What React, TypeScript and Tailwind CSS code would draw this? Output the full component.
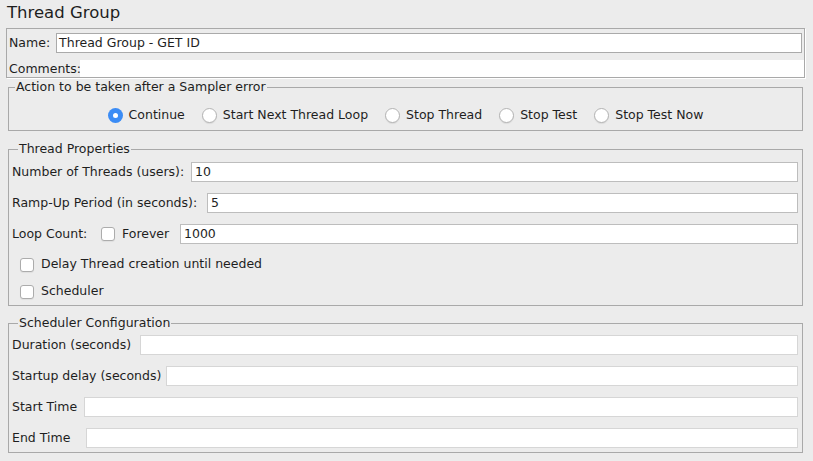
const Radio = ({ label, checked }: { label: string; checked?: boolean }) => (
  <label className="flex items-center gap-[6px]">
    {checked ? (
      <span className="flex h-[15px] w-[15px] items-center justify-center rounded-full bg-[#3b8cf5]">
        <span className="h-[5px] w-[5px] rounded-full bg-white" />
      </span>
    ) : (
      <span className="h-[15px] w-[15px] rounded-full border border-[#b3b3b3] bg-white shadow-[0_1px_1px_rgba(0,0,0,0.08)]" />
    )}
    <span>{label}</span>
  </label>
);

const Checkbox = () => (
  <span className="h-[14px] w-[14px] shrink-0 rounded-[3px] border border-[#acacac] bg-white shadow-[0_1px_1px_rgba(0,0,0,0.06)]" />
);

const Field = ({ value = "", light }: { value?: string; light?: boolean }) => (
  <div
    className={
      "flex h-[20px] flex-1 items-center border bg-white pl-[3px] " +
      (light ? "border-[#d6d6d6]" : "border-[#bdbdbd]")
    }
  >
    {value}
  </div>
);

const App = () => {
  return (
    <div className="h-[461px] w-[813px] overflow-hidden bg-[#ececec] font-['DejaVu_Sans',sans-serif] text-[12.5px] text-[#1e1e1e]">
      {/* titre */}
      <div className="h-[28px] pl-[7px] text-[16.5px] leading-[26px]">Thread Group</div>

      {/* nom + commentaires */}
      <div className="ml-[6px] h-[50px] w-[799px] border border-[#a9a9a9] shadow-[1px_1px_0_#fff]">
        <div className="flex items-center gap-[6px] pl-[2px] pr-[2px] pt-[4px]">
          <span>Name:</span>
          <div className="flex h-[20px] flex-1 items-center border border-[#aaaaaa] bg-white pl-[2px]">
            Thread Group - GET ID
          </div>
        </div>
        <div className="mt-[7px] flex h-[17px] items-center pl-[2px]">
          <span className="w-[71px] pt-[2px]">Comments:</span>
          <div className="h-full flex-1 bg-white" />
        </div>
      </div>

      {/* action après erreur */}
      <fieldset className="ml-[8px] mt-[2px] w-[795px] border border-[#a9a9a9] pb-[7px] pt-[13px]">
        <legend className="ml-[6px] px-[1px] leading-[14px]">Action to be taken after a Sampler error</legend>
        <div className="flex items-center justify-center gap-[17px] leading-[16px]">
          <Radio label="Continue" checked />
          <Radio label="Start Next Thread Loop" />
          <Radio label="Stop Thread" />
          <Radio label="Stop Test" />
          <Radio label="Stop Test Now" />
        </div>
      </fieldset>

      {/* propriétés */}
      <fieldset className="ml-[8px] mt-[11px] w-[795px] border border-[#a9a9a9] pl-[3px] pr-[4px] pt-[6px]">
        <legend className="ml-[6px] px-[1px] leading-[14px]">Thread Properties</legend>
        <div className="flex flex-col gap-[11px]">
          <div className="flex items-center">
            <span className="w-[179px] shrink-0 whitespace-nowrap">Number of Threads (users):</span>
            <Field value="10" />
          </div>
          <div className="flex items-center">
            <span className="w-[195px] shrink-0 whitespace-nowrap">Ramp-Up Period (in seconds):</span>
            <Field value="5" />
          </div>
          <div className="flex items-center">
            <span className="w-[89px] shrink-0 whitespace-nowrap">Loop Count:</span>
            <Checkbox />
            <span className="ml-[7px] w-[58px] shrink-0">Forever</span>
            <Field value="1000" />
          </div>
        </div>
        <div className="mt-[7px]">
          <div className="flex h-[27px] items-center gap-[7px] pl-[8px]">
            <Checkbox />
            <span>Delay Thread creation until needed</span>
          </div>
          <div className="flex h-[27px] items-center gap-[7px] pl-[8px]">
            <Checkbox />
            <span>Scheduler</span>
          </div>
        </div>
      </fieldset>

      {/* planificateur */}
      <fieldset className="ml-[8px] mt-[10px] w-[795px] border border-[#a9a9a9] pb-[4px] pl-[3px] pr-[4px] pt-[5px]">
        <legend className="ml-[6px] px-[1px] leading-[14px]">Scheduler Configuration</legend>
        <div className="flex flex-col gap-[11px]">
          <div className="flex items-center">
            <span className="w-[128px] shrink-0 whitespace-nowrap">Duration (seconds)</span>
            <Field light />
          </div>
          <div className="flex items-center">
            <span className="w-[154px] shrink-0 whitespace-nowrap">Startup delay (seconds)</span>
            <Field light />
          </div>
          <div className="flex items-center">
            <span className="w-[72px] shrink-0 whitespace-nowrap">Start Time</span>
            <Field light />
          </div>
          <div className="flex items-center">
            <span className="w-[74px] shrink-0 whitespace-nowrap">End Time</span>
            <Field light />
          </div>
        </div>
      </fieldset>
    </div>
  );
};

export default App;
